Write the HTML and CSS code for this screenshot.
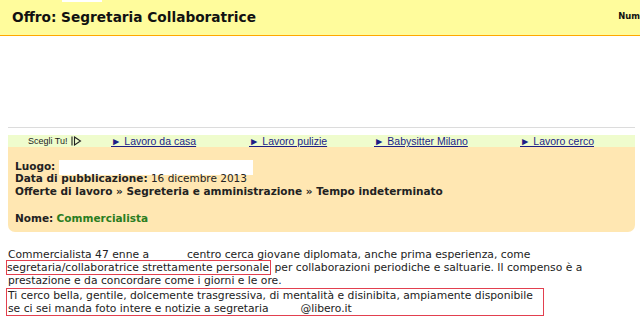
FILE: index.html
```html
<!DOCTYPE html>
<html lang="it">
<head>
<meta charset="utf-8">
<title>Offro: Segretaria Collaboratrice</title>
<link rel="stylesheet" href="styles.css">
</head>
<body>
<header class="topbar">
  <span class="topmark"></span>
  <h1 class="title">Offro: Segretaria Collaboratrice</h1>
  <span class="num">Num</span>
</header>
<main class="page">
  <div class="adspace"></div>
  <div class="rule"></div>
  <nav class="navbar">
    <span class="choose">Scegli Tu! <svg class="chooseicon" width="11" height="10" viewBox="0 0 11 10"><path d="M1 0.5V9.5M3.5 1L9.5 5L3.5 9Z" fill="none" stroke="#222" stroke-width="1.1"/></svg></span>
    <a class="navlink" href="#">► Lavoro da casa</a>
    <a class="navlink" href="#">► Lavoro pulizie</a>
    <a class="navlink" href="#">► Babysitter Milano</a>
    <a class="navlink" href="#">► Lavoro cerco</a>
  </nav>
  <section class="infobox">
    <div class="row row-first"><b>Luogo:</b> <span class="blank"></span></div>
    <div class="row"><b>Data di pubblicazione:</b> 16 dicembre 2013</div>
    <div class="row"><b>Offerte di lavoro » Segreteria e amministrazione » Tempo indeterminato</b></div>
    <div class="row">&nbsp;</div>
    <div class="row"><b>Nome:</b> <b class="green">Commercialista</b></div>
  </section>
  <div class="text">
    Commercialista 47 enne a <span class="gap"></span> centro cerca giovane diplomata, anche prima esperienza, come<br>
    <span class="mark">segretaria/collaboratrice strettamente personale</span> per collaborazioni periodiche e saltuarie. Il compenso è a<br>
    prestazione e da concordare come i giorni e le ore.
    <div class="markbox">Ti cerco bella, gentile, dolcemente trasgressiva, di mentalità e disinibita, ampiamente disponibile<br>se ci sei manda foto intere e notizie a segretaria <span class="gap gap2"></span> @libero.it</div>
  </div>
</main>
</body>
</html>
```
FILE: styles.css
```css
html, body {
  margin: 0;
  padding: 0;
  overflow: hidden;
  background: #fff;
}
body {
  font-family: "DejaVu Sans", Verdana, sans-serif;
  font-size: 10.5px;
  color: #222;
  width: 640px;
}
.topbar {
  position: relative;
  height: 35px;
  background: #fffc9c;
  border-bottom: 1px solid #ffa800;
  display: flex;
  align-items: flex-start;
  padding-left: 12px;
  box-sizing: content-box;
}
.topmark {
  position: absolute;
  left: 62px;
  top: 0;
  width: 40px;
  height: 2px;
  background: #fff;
}
.title {
  margin: 0;
  padding-top: 9px;
  font-size: 13.7px;
  line-height: 16px;
  font-weight: bold;
  color: #111;
  white-space: nowrap;
}
.num {
  margin-left: auto;
  flex-shrink: 0;
  white-space: nowrap;
  font-weight: bold;
  font-size: 8.4px;
  line-height: 12px;
  padding-top: 10px;
  color: #111;
}
.page {
  padding: 0 5px 0 8px;
}
.adspace {
  height: 91px;
}
.rule {
  border-top: 1px solid #dcdcdc;
  margin-bottom: 7px;
}
.navbar {
  height: 12px;
  background: #effccd;
  display: grid;
  grid-template-columns: 83px 138px 125px 146px 1fr;
  padding-left: 20px;
  font-family: "Liberation Sans", Arial, sans-serif;
  font-size: 10.5px;
  line-height: 12px;
  white-space: nowrap;
}
.choose {
  font-size: 9px;
  color: #222;
  display: flex;
  align-items: center;
  gap: 3px;
}
.chooseicon {
  display: block;
}
.navlink {
  color: #1d1d86;
  text-decoration: underline;
}
.infobox {
  background: #ffe7b2;
  border-radius: 0 0 7px 7px;
  padding: 14px 7px 6px;
  line-height: 13.4px;
  white-space: nowrap;
}
.row-first {
  line-height: 11px;
}
.blank {
  display: inline-block;
  width: 194px;
  height: 15px;
  background: #fff;
  vertical-align: top;
  margin-top: -1px;
  margin-bottom: -3px;
}
.green {
  color: #2a7d1e;
}
.text {
  margin-top: 16px;
  font-size: 10.75px;
  line-height: 13.3px;
  white-space: nowrap;
}
.gap {
  display: inline-block;
  width: 31px;
}
.gap2 {
  width: 25px;
}
.mark {
  border: 1px solid #e2404f;
  margin-left: -2px;
  padding: 0 1px 0 0;
}
.markbox {
  width: 535px;
  border: 1px solid #e2404f;
  margin-left: -2px;
  padding-left: 1px;
}
```
